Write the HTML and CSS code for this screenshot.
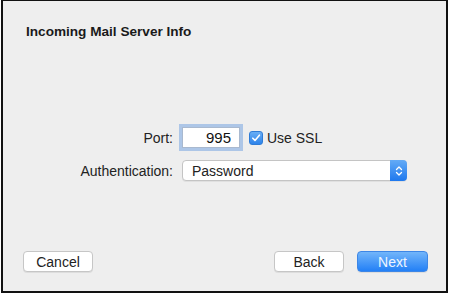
FILE: index.html
```
<!DOCTYPE html>
<html lang="en">
<head>
    <meta charset="UTF-8">
    <title>Incoming Mail Server Info</title>
    <link rel="stylesheet" href="styles.css">
</head>
<body>
    <div class="window">
        <h1 class="titulo">Incoming Mail Server Info</h1>

        <form class="form-servidor" onsubmit="return false;">
            <label class="rotulo" for="porta">Port:</label>
            <div class="linha-porta">
                <input id="porta" class="campo-porta" type="text" value="995">
                <label class="check">
                    <span class="caixa">
                        <svg width="10" height="10" viewBox="0 0 10 10"><path d="M1.8 5.2 L4 7.4 L8.4 2.2" fill="none" stroke="#fff" stroke-width="1.6" stroke-linecap="round" stroke-linejoin="round"/></svg>
                    </span>
                    Use SSL
                </label>
            </div>

            <span class="rotulo">Authentication:</span>
            <div class="seletor">
                <span class="seletor-texto">Password</span>
                <span class="seletor-setas">
                    <svg width="8" height="12" viewBox="0 0 8 12"><path d="M1.5 4.5 L4 2 L6.5 4.5 M1.5 7.5 L4 10 L6.5 7.5" fill="none" stroke="#fff" stroke-width="1.3" stroke-linecap="round" stroke-linejoin="round"/></svg>
                </span>
            </div>
        </form>

        <div class="acoes">
            <button type="button" class="btn">Cancel</button>
            <span class="espaco"></span>
            <button type="button" class="btn">Back</button>
            <button type="button" class="btn btn-next">Next</button>
        </div>
    </div>
</body>
</html>
```
FILE: styles.css
```
* { box-sizing: border-box; margin: 0; padding: 0; }
body {
    background: #fff;
    font-family: 'Liberation Sans', Arial, sans-serif;
    font-size: 14px;
    color: #222;
}
.window {
    width: 447px; height: 293px; margin-left: 1px;
    background: #eeeeee;
    border: 2px solid #111; border-top-width: 1px;
    display: flex; flex-direction: column;
}
.titulo {
    font-size: 13.6px; font-weight: bold; line-height: 16px;
    padding: 23px 0 0 23px; color: #1a1a1a;
}
.form-servidor {
    display: grid; grid-template-columns: 170px auto;
    column-gap: 9px; row-gap: 12px; align-items: center;
    margin-top: 87px;
}
.rotulo { text-align: right; color: #222; }
.linha-porta { display: flex; align-items: center; }
.campo-porta {
    width: 58px; height: 21px; border: 1px solid #a9b9cf; background: #fff;
    font-family: 'Liberation Sans', Arial, sans-serif; font-size: 15px; color: #111;
    text-align: right; padding-right: 8px; outline: none;
    box-shadow: 0 0 0 3px rgba(120, 165, 225, 0.55);
}
.check { display: flex; align-items: center; gap: 4px; margin-left: 9px; }
.caixa {
    width: 14px; height: 14px; border-radius: 3px;
    background: linear-gradient(#69aef5, #2d83ea);
    border: 1px solid #2f7cd6;
    display: flex; align-items: center; justify-content: center;
}
.seletor {
    width: 225px; height: 21px; background: #fff;
    border: 1px solid #c4c4c4; border-radius: 4px;
    display: flex; align-items: center;
    box-shadow: 0 1px 0 rgba(0, 0, 0, 0.06);
}
.seletor-texto { flex: 1; padding-left: 9px; }
.seletor-setas {
    width: 17px; height: 21px; margin: -1px -1px -1px 0;
    border-radius: 0 4px 4px 0;
    background: linear-gradient(#64abf6, #1e78ee);
    display: flex; align-items: center; justify-content: center;
}
.acoes {
    margin-top: auto; display: flex; align-items: center;
    padding: 0 18px 19px 20px; gap: 13px;
}
.espaco { flex: 1; }
.btn {
    width: 70px; height: 21px; background: #fff;
    border: 1px solid #c6c6c6; border-radius: 4px;
    font-family: 'Liberation Sans', Arial, sans-serif; font-size: 14px; color: #222;
    box-shadow: 0 1px 0 rgba(0, 0, 0, 0.07);
}
.btn-next {
    width: 71px; color: #eef5ff; border-color: #3d86e6;
    background: linear-gradient(#72b5fa, #2380f6);
}
```
